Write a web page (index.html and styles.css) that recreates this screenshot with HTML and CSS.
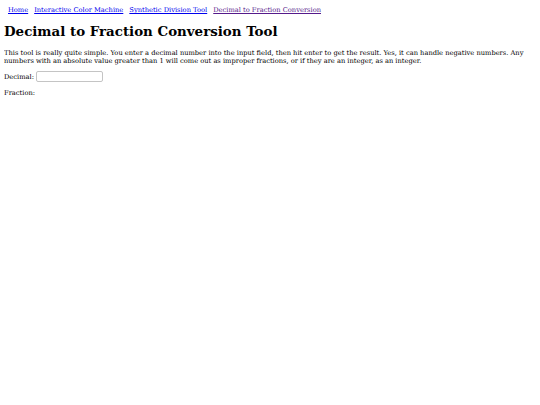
FILE: index.html
```html
<!DOCTYPE html>
<html>
<head>
<meta charset="utf-8">
<link rel="stylesheet" href="styles.css">
</head>
<body>
<nav class="nav">
<a class="link" href="#">Home</a>
<a class="link" href="#">Interactive Color Machine</a>
<a class="link" href="#">Synthetic Division Tool</a>
<a class="link visited" href="#">Decimal to Fraction Conversion</a>
</nav>
<h1 class="title">Decimal to Fraction Conversion Tool</h1>
<p class="text">This tool is really quite simple. You enter a decimal number into the input field, then hit enter to get the result. Yes, it can handle negative numbers. Any numbers with an absolute value greater than 1 will come out as improper fractions, or if they are an integer, as an integer.</p>
<div class="row">Decimal: <input class="field" type="text"></div>
<div class="row fraction">Fraction: </div>
</body>
</html>
```
FILE: styles.css
```css
html, body { background: #fff; }
body {
  margin: 4px;
  font-family: "DejaVu Serif", serif;
  font-size: 6.7px;
  line-height: 8px;
  color: #000;
}
.nav {
  display: flex;
  gap: 6px;
  padding: 2px 4px 0;
  height: 8px;
}
.link { color: #00e; }
.link.visited { color: #551a8b; }
.title {
  font-size: 13.4px;
  line-height: 16px;
  font-weight: bold;
  margin: 9px 0 0;
}
.text { margin: 10px 0 0; }
.row { margin: 6px 0 0; display: flex; align-items: center; gap: 2px; }
.field {
  box-sizing: border-box;
  width: 67px;
  height: 11px;
  border: 1px solid #c4c4c4;
  border-radius: 2px;
  padding: 1px;
  font-size: 7px;
  margin: 0;
}
.fraction { margin-top: 7px; }
```
